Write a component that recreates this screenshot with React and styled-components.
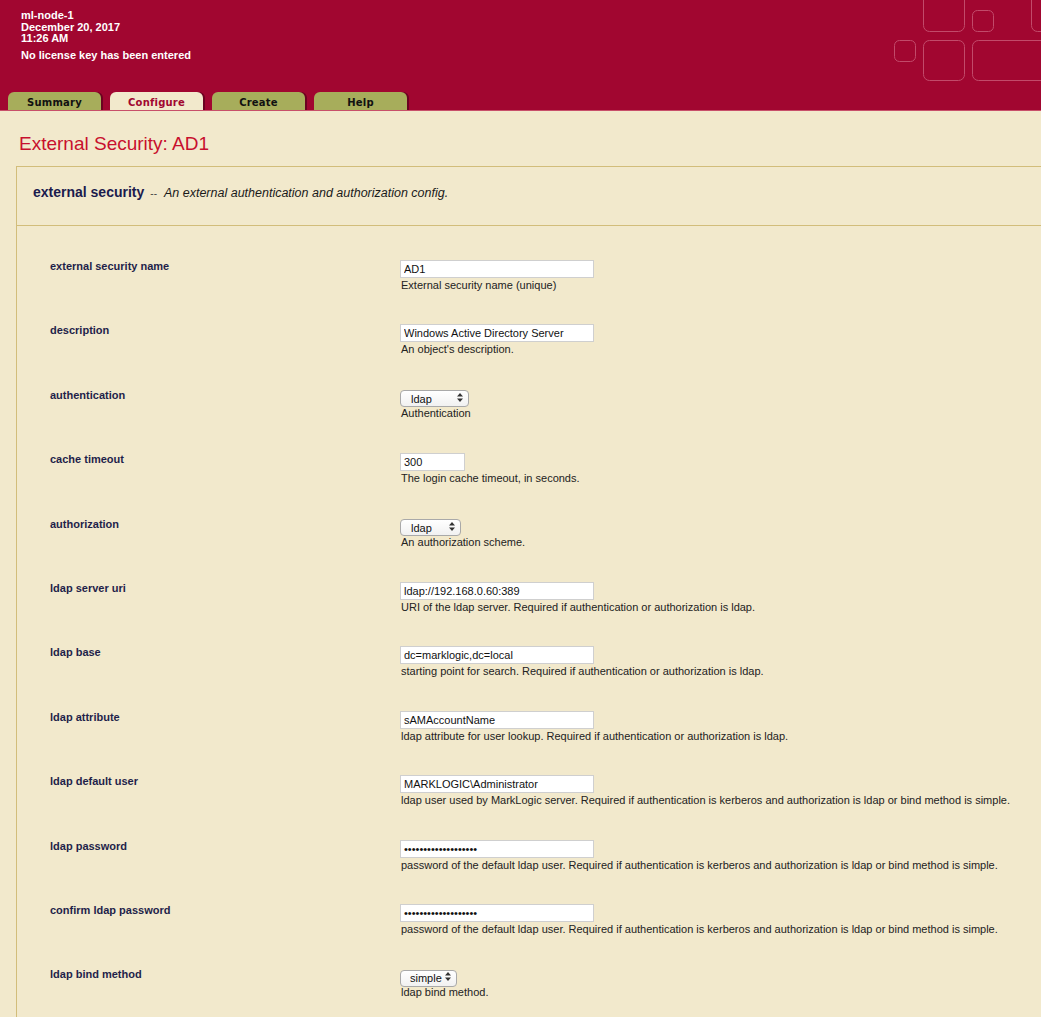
import React from "react";
import styled, { createGlobalStyle } from "styled-components";

const Global = createGlobalStyle`
  html, body { margin: 0; padding: 0; background: #f2e9cc; overflow-x: hidden; }
  body { font-family: "Liberation Sans", Arial, sans-serif; }
`;

const Header = styled.header`
  position: relative;
  height: 110px;
  background: #a10630;
  border-bottom: 1px solid #c8506a;
  display: flex;
  flex-direction: column;
  justify-content: space-between;
  overflow: hidden;
`;

const Info = styled.div`
  padding: 10px 0 0 21px;
  color: #fff;
  font-size: 11px;
  font-weight: bold;
  line-height: 11.7px;
`;

const InfoLine = styled.div`
  margin-top: ${(p) => (p.$gap ? "5px" : "0")};
`;

const Deco = styled.svg`
  position: absolute;
  top: 0;
  right: 0;
`;

const Tabs = styled.nav`
  display: flex;
  gap: 7px;
  padding-left: 8px;
  align-items: flex-end;
`;

const Tab = styled.div`
  width: 93px;
  height: 18px;
  border-radius: 6px 6px 0 0;
  background: ${(p) => (p.$active ? "#f2e9cc" : "#a7ad5b")};
  color: ${(p) => (p.$active ? "#a10630" : "#111")};
  box-shadow: 2px 0 0 #6b0220;
  margin-right: 2px;
  display: flex;
  align-items: center;
  justify-content: center;
  font-family: "DejaVu Sans", Verdana, sans-serif;
  font-size: 10px;
  font-weight: bold;
  letter-spacing: 0.2px;
  padding-top: 2px;
  box-sizing: border-box;
`;

const Title = styled.h1`
  margin: 22px 0 11px 19px;
  font-size: 19px;
  line-height: 22px;
  font-weight: normal;
  color: #c8102e;
`;

const Box = styled.section`
  margin-left: 16px;
  border: 1px solid #d2bd7a;
  border-right: none;
`;

const BoxHead = styled.div`
  height: 59px;
  box-sizing: border-box;
  padding: 17px 0 0 16px;
  border-bottom: 1px solid #d2bd7a;
  line-height: 16px;
  display: flex;
  align-items: baseline;
`;

const HeadName = styled.span`
  font-size: 14px;
  font-weight: bold;
  color: #1b1b4d;
`;

const HeadDash = styled.span`
  font-size: 10px;
  color: #444;
  margin: 0 7px 0 6px;
`;

const HeadDesc = styled.span`
  font-size: 12.5px;
  font-style: italic;
  color: #1a1a1a;
`;

const Rows = styled.div`
  padding: 34px 0 0 33px;
`;

const Row = styled.div`
  display: grid;
  grid-template-columns: 350px 1fr;
  height: 64.4px;
`;

const Label = styled.div`
  font-size: 11px;
  line-height: 13px;
  font-weight: bold;
  color: #1f1f4a;
`;

const Control = styled.div`
  display: flex;
  flex-direction: column;
  align-items: flex-start;
`;

const TextInput = styled.input`
  width: ${(p) => p.$w || 194}px;
  height: 18px;
  box-sizing: border-box;
  border: 1px solid #cfcfcf;
  background: #fff;
  padding: 0 3px;
  margin: 0;
  font-family: "Liberation Sans", Arial, sans-serif;
  font-size: 11px;
  color: #111;
  outline: none;
`;

const SelectWrap = styled.div`
  position: relative;
  width: ${(p) => p.$w}px;
  height: 17px;
`;

const Select = styled.select`
  appearance: none;
  -webkit-appearance: none;
  width: 100%;
  height: 17px;
  box-sizing: border-box;
  border: 1px solid #a9a9a9;
  border-radius: 4px;
  background: linear-gradient(#ffffff, #f1f1f1);
  padding: 0 0 0 ${(p) => p.$pl || 10}px;
  margin: 0;
  font-family: "Liberation Sans", Arial, sans-serif;
  font-size: 11px;
  color: #111;
  outline: none;
`;

const Arrows = styled.svg`
  position: absolute;
  right: 6px;
  top: 4px;
  pointer-events: none;
`;

const Desc = styled.div`
  font-size: 11px;
  line-height: 13px;
  margin: 1px 0 0 1px;
  color: #222;
`;

const rows = [
  { label: "external security name", type: "text", value: "AD1", desc: "External security name (unique)" },
  { label: "description", type: "text", value: "Windows Active Directory Server", desc: "An object's description." },
  { label: "authentication", type: "select", value: "ldap", w: 69, desc: "Authentication" },
  { label: "cache timeout", type: "text", value: "300", w: 65, desc: "The login cache timeout, in seconds." },
  { label: "authorization", type: "select", value: "ldap", w: 61, desc: "An authorization scheme." },
  { label: "ldap server uri", type: "text", value: "ldap://192.168.0.60:389", desc: "URI of the ldap server. Required if authentication or authorization is ldap." },
  { label: "ldap base", type: "text", value: "dc=marklogic,dc=local", desc: "starting point for search. Required if authentication or authorization is ldap." },
  { label: "ldap attribute", type: "text", value: "sAMAccountName", desc: "ldap attribute for user lookup. Required if authentication or authorization is ldap." },
  { label: "ldap default user", type: "text", value: "MARKLOGIC\\Administrator", desc: "ldap user used by MarkLogic server. Required if authentication is kerberos and authorization is ldap or bind method is simple." },
  { label: "ldap password", type: "password", value: "xxxxxxxxxxxxxxxxxxx", desc: "password of the default ldap user. Required if authentication is kerberos and authorization is ldap or bind method is simple." },
  { label: "confirm ldap password", type: "password", value: "xxxxxxxxxxxxxxxxxxx", desc: "password of the default ldap user. Required if authentication is kerberos and authorization is ldap or bind method is simple." },
  { label: "ldap bind method", type: "select", value: "simple", w: 57, pl: 9, desc: "ldap bind method." },
];

function Field({ r }) {
  if (r.type === "select") {
    return (
      <SelectWrap $w={r.w}>
        <Select $pl={r.pl} defaultValue={r.value}>
          <option value={r.value}>{r.value}</option>
        </Select>
        <Arrows width="6" height="9" viewBox="0 0 6 9">
          <path d="M3 0 L6 3.5 H0 Z M0 5.5 H6 L3 9 Z" fill="#333" />
        </Arrows>
      </SelectWrap>
    );
  }
  return <TextInput type={r.type} $w={r.w} defaultValue={r.value} />;
}

const tabs = ["Summary", "Configure", "Create", "Help"];

export default function App() {
  return (
    <>
      <Global />
      <Header>
        <Info>
          <InfoLine>ml-node-1</InfoLine>
          <InfoLine>December 20, 2017</InfoLine>
          <InfoLine>11:26 AM</InfoLine>
          <InfoLine $gap>No license key has been entered</InfoLine>
        </Info>
        <Deco width="160" height="90" viewBox="0 0 160 90" fill="none" stroke="#c24a6a" strokeWidth="1">
          <rect x="42.5" y="-10.5" width="41" height="42" rx="6" />
          <rect x="91.5" y="10.5" width="21" height="21" rx="5" />
          <rect x="150.5" y="-10.5" width="40" height="42" rx="6" />
          <rect x="13.5" y="40.5" width="21" height="21" rx="5" />
          <rect x="42.5" y="40.5" width="41" height="40" rx="6" />
          <rect x="91.5" y="40.5" width="90" height="40" rx="6" />
        </Deco>
        <Tabs>
          {tabs.map((t) => (
            <Tab key={t} $active={t === "Configure"}>{t}</Tab>
          ))}
        </Tabs>
      </Header>
      <Title>External Security: AD1</Title>
      <Box>
        <BoxHead>
          <HeadName>external security</HeadName>
          <HeadDash>--</HeadDash>
          <HeadDesc>An external authentication and authorization config.</HeadDesc>
        </BoxHead>
        <Rows>
          {rows.map((r) => (
            <Row key={r.label}>
              <Label>{r.label}</Label>
              <Control>
                <Field r={r} />
                <Desc>{r.desc}</Desc>
              </Control>
            </Row>
          ))}
        </Rows>
      </Box>
    </>
  );
}
